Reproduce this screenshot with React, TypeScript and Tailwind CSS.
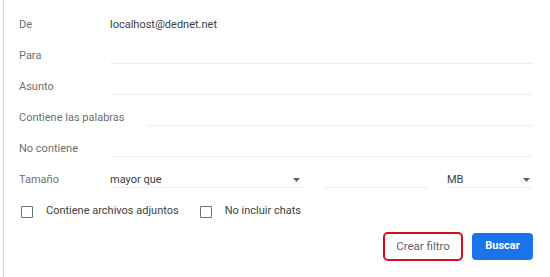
import React from 'react';

// Search filter form (Gmail-style advanced search panel)
const FONT = "font-['Roboto','Liberation_Sans',sans-serif]";

function Caret() {
  return (
    <svg width="7" height="4" viewBox="0 0 7 4" className="shrink-0">
      <path d="M0 0 L7 0 L3.5 4 Z" fill="#5f6368" />
    </svg>
  );
}

function TextRow({ label, labelWidth = 'w-[91px]', value }: { label: string; labelWidth?: string; value?: string }) {
  return (
    <div className="flex items-center h-[31px]">
      <span className={`${labelWidth} shrink-0 text-[#6b6f73]`}>{label}</span>
      {value ? (
        <span className="text-[#3c4043]">{value}</span>
      ) : (
        <div className="flex-1 h-[14px] border-b border-[#eeeeee]" />
      )}
    </div>
  );
}

function Checkbox({ label }: { label: string }) {
  return (
    <label className="flex items-center gap-[13px]">
      <span className="w-[12px] h-[12px] border-[1.5px] border-[#6b6f73] rounded-[1px]" />
      <span className="text-[#3c4043]">{label}</span>
    </label>
  );
}

export default function App() {
  return (
    <div className={`w-[550px] h-[277px] bg-white ${FONT} text-[11px] flex`}>
      <div className="w-[3px]" />
      <div className="flex-1 border-l border-[#d4d4d4] pt-[10px] pl-[15px] pr-[17px]">
        <TextRow label="De" value="localhost@dednet.net" />
        <TextRow label="Para" />
        <TextRow label="Asunto" />
        <TextRow label="Contiene las palabras" labelWidth="w-[128px]" />
        <TextRow label="No contiene" />

        {/* Size row */}
        <div className="flex items-center h-[31px]">
          <span className="w-[91px] shrink-0 text-[#6b6f73]">Tamaño</span>
          <div className="w-[193px] h-[14px] border-b border-[#eeeeee] flex items-center justify-between pr-[3px]">
            <span className="text-[#3c4043]">mayor que</span>
            <Caret />
          </div>
          <div className="w-[105px] ml-[20px] h-[14px] border-b border-[#eeeeee]" />
          <div className="flex-1 ml-[19px] h-[14px] border-b border-[#eeeeee] flex items-center justify-between pr-[3px]">
            <span className="text-[#3c4043]">MB</span>
            <Caret />
          </div>
        </div>

        {/* Checkboxes */}
        <div className="flex items-center h-[31px] pl-[2px] gap-[21px]">
          <Checkbox label="Contiene archivos adjuntos" />
          <Checkbox label="No incluir chats" />
        </div>

        {/* Actions */}
        <div className="flex justify-end items-center gap-[9px] mt-[5px]">
          <div className="w-[80px] h-[29px] border-2 border-[#d10f1a] rounded-[5px] flex items-center justify-center">
            <span className="text-[#5f6368] text-[11.5px]">Crear filtro</span>
          </div>
          <button className="w-[61px] h-[27px] bg-[#1a73e8] rounded-[4px] text-white font-bold text-[11px]">
            Buscar
          </button>
        </div>
      </div>
    </div>
  );
}
